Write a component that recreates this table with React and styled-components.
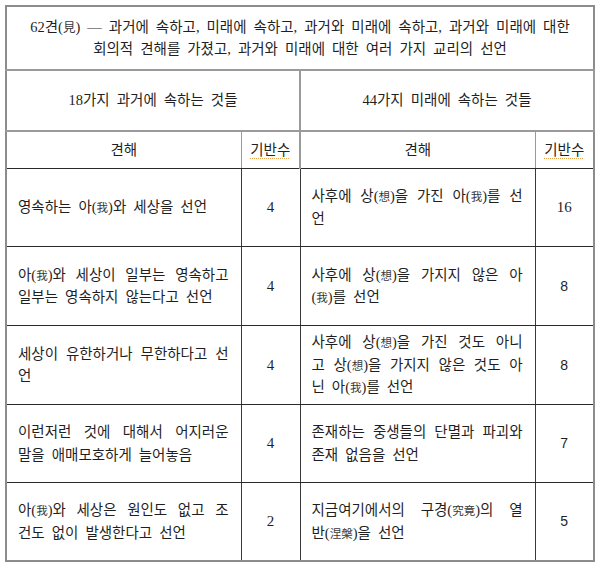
import React from 'react';
import styled, { createGlobalStyle } from 'styled-components';

const GlobalStyle = createGlobalStyle`
  html, body { margin: 0; padding: 0; background: #ffffff; }
  body {
    font-family: "Liberation Serif", "Noto Sans CJK KR", serif;
    color: #1f1f1f;
  }
`;

const Page = styled.div`
  padding: 5px 0 0 5px;
`;

const Table = styled.table`
  border-collapse: collapse;
  table-layout: fixed;
  width: 589px;
  border: 2px solid #8c8c8c;
  font-size: 14.5px;
  line-height: 22.5px;
  word-spacing: 3.4px;
`;

const Col = styled.col`
  width: ${(p) => p.$w}px;
`;

const TitleCell = styled.th`
  height: 62px;
  padding: 0 4px;
  font-weight: normal;
  text-align: center;
  vertical-align: middle;
  border-bottom: 2px solid #9a9a9a;
`;

const GroupCell = styled.th`
  height: 59px;
  padding: 0;
  font-weight: normal;
  text-align: center;
  vertical-align: middle;
  border-bottom: 2px solid #9a9a9a;
  border-right: 2px solid #9a9a9a;
`;

const HeadCell = styled.th`
  height: 36px;
  padding: 0;
  font-weight: normal;
  text-align: center;
  vertical-align: middle;
  border-bottom: 1px solid #2a2a2a;
  border-right: ${(p) => (p.$split ? '2px solid #9a9a9a' : '1px solid #9a9a9a')};
`;

const SpellMark = styled.span`
  text-decoration: underline dotted #eba24a;
  text-decoration-thickness: 1px;
  text-underline-offset: 3px;
`;

const TextCell = styled.td`
  height: ${(p) => p.$h}px;
  padding: 0 12px 0 11px;
  vertical-align: middle;
  border-bottom: 1px solid #2a2a2a;
  border-right: 1px solid #3a3a3a;
  word-break: break-all;
`;

const NumCell = styled.td`
  padding: 0;
  text-align: center;
  vertical-align: middle;
  font-family: ${(p) =>
    p.$serif ? '"Liberation Serif", serif' : '"Liberation Sans", sans-serif'};
  font-size: ${(p) => (p.$serif ? '15px' : '14px')};
  border-bottom: 1px solid #2a2a2a;
  border-right: 1px solid #3a3a3a;
`;

const Line = styled.div`
  text-align: ${(p) => (p.$center ? 'center' : 'justify')};
  text-align-last: ${(p) => (p.$center ? 'center' : p.$last ? 'left' : 'justify')};
  white-space: nowrap;
`;

const HanjaGroup = styled.span`
  display: inline-block;
  word-spacing: 0;
`;

const Hanja = styled.span`
  font-family: "Noto Sans CJK KR", sans-serif;
  font-size: ${(p) => (p.$title ? '12.5px' : '11.5px')};
  color: #3a3a3a;
`;

const HANJA_SPLIT = /(\(?[\u4e00-\u9fff]+\)?)/;

function withHanja(text, title) {
  return text.split(HANJA_SPLIT).map((part, i) => {
    if (!/[\u4e00-\u9fff]/.test(part)) return part;
    const m = part.match(/^(\(?)([\u4e00-\u9fff]+)(\)?)$/);
    return (
      <HanjaGroup key={i}>
        {m[1]}
        <Hanja $title={title}>{m[2]}</Hanja>
        {m[3]}
      </HanjaGroup>
    );
  });
}

function Lines({ lines }) {
  return lines.map((l, i) => (
    <Line key={i} $last={i === lines.length - 1}>
      {withHanja(l)}
    </Line>
  ));
}

const title = [
  '62견(見) — 과거에 속하고, 미래에 속하고, 과거와 미래에 속하고, 과거와 미래에 대한',
  '회의적 견해를 가졌고, 과거와 미래에 대한 여러 가지 교리의 선언',
];

const rows = [
  {
    h: 77,
    left: ['영속하는 아(我)와 세상을 선언'],
    ln: '4',
    lSerif: true,
    right: ['사후에 상(想)을 가진 아(我)를 선', '언'],
    rn: '16',
    rSerif: true,
  },
  {
    h: 78,
    left: ['아(我)와 세상이 일부는 영속하고', '일부는 영속하지 않는다고 선언'],
    ln: '4',
    lSerif: true,
    right: ['사후에 상(想)을 가지지 않은 아', '(我)를 선언'],
    rn: '8',
  },
  {
    h: 78,
    left: ['세상이 유한하거나 무한하다고 선', '언'],
    ln: '4',
    lSerif: true,
    right: ['사후에 상(想)을 가진 것도 아니', '고 상(想)을 가지지 않은 것도 아', '닌 아(我)를 선언'],
    rn: '8',
  },
  {
    h: 77,
    left: ['이런저런 것에 대해서 어지러운', '말을 애매모호하게 늘어놓음'],
    ln: '4',
    lSerif: true,
    right: ['존재하는 중생들의 단멸과 파괴와', '존재 없음을 선언'],
    rn: '7',
  },
  {
    h: 77,
    left: ['아(我)와 세상은 원인도 없고 조', '건도 없이 발생한다고 선언'],
    ln: '2',
    lSerif: true,
    right: ['지금여기에서의 구경(究竟)의 열', '반(涅槃)을 선언'],
    rn: '5',
  },
];

export default function App() {
  return (
    <>
      <GlobalStyle />
      <Page>
        <Table>
          <colgroup>
            <Col $w={235} />
            <Col $w={59} />
            <Col $w={235} />
            <Col $w={59} />
          </colgroup>
          <thead>
            <tr>
              <TitleCell colSpan={4}>
                {title.map((t, i) => (
                  <Line key={i} $center>
                    {withHanja(t, true)}
                  </Line>
                ))}
              </TitleCell>
            </tr>
            <tr>
              <GroupCell colSpan={2}>18가지 과거에 속하는 것들</GroupCell>
              <GroupCell colSpan={2}>44가지 미래에 속하는 것들</GroupCell>
            </tr>
            <tr>
              <HeadCell>견해</HeadCell>
              <HeadCell $split>
                <SpellMark>기반수</SpellMark>
              </HeadCell>
              <HeadCell>견해</HeadCell>
              <HeadCell>
                <SpellMark>기반수</SpellMark>
              </HeadCell>
            </tr>
          </thead>
          <tbody>
            {rows.map((r, i) => (
              <tr key={i}>
                <TextCell $h={r.h}>
                  <Lines lines={r.left} />
                </TextCell>
                <NumCell $serif={r.lSerif}>{r.ln}</NumCell>
                <TextCell $h={r.h}>
                  <Lines lines={r.right} />
                </TextCell>
                <NumCell $serif={r.rSerif}>{r.rn}</NumCell>
              </tr>
            ))}
          </tbody>
        </Table>
      </Page>
    </>
  );
}
